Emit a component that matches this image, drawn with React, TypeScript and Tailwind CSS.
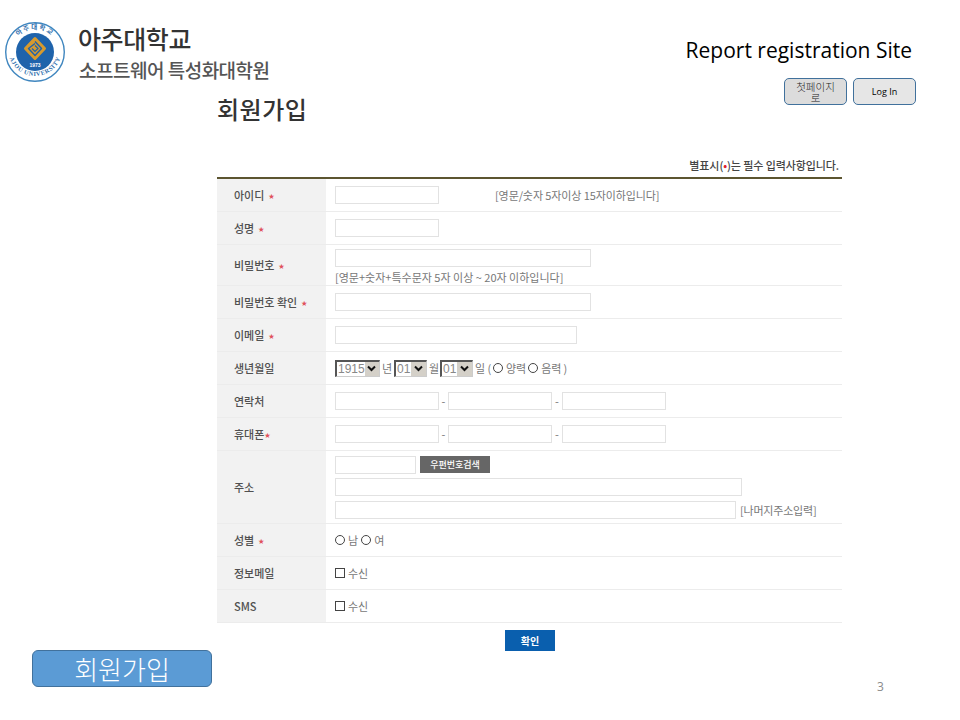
import React from "react";

const FONT = "[font-family:'Noto_Sans_CJK_KR','Noto_Sans',sans-serif]";

function Logo() {
  return (
    <svg width="60" height="60" viewBox="0 0 60 60" className="shrink-0">
      <defs>
        <path id="arcTop" d="M7 30 A23 23 0 0 1 53 30" />
        <path id="arcBottom" d="M3 27 A27 27 0 1 0 57 27" />
      </defs>
      <circle cx="30" cy="30" r="29.3" fill="#ffffff" stroke="#3f86bf" strokeWidth="1.4" />
      <circle cx="30" cy="30" r="19" fill="#1f63ab" />
      <path d="M30 16.5 L39.5 26.5 L30 36.5 L20.5 26.5 Z" fill="#d79a2e" stroke="#d79a2e" strokeWidth="3" strokeLinejoin="round" />
      <path d="M30 19.5 L36.5 26.5 L30 33.5 L23.5 26.5 L30 21.5" fill="none" stroke="#1f63ab" strokeWidth="1.4" strokeLinejoin="round" />
      <path d="M30 23.5 L33 26.5 L30 29.5 L27 26.5" fill="none" stroke="#1f63ab" strokeWidth="1.2" />
      <text x="30" y="45" textAnchor="middle" fontSize="5" fontWeight="700" fill="#ffffff" fontFamily="Liberation Sans">1973</text>
      <text fontSize="6.5" fontWeight="700" fill="#2f6fae" fontFamily="Noto Sans CJK KR" letterSpacing="1.5">
        <textPath href="#arcTop" startOffset="50%" textAnchor="middle">아주대학교</textPath>
      </text>
      <text fontSize="6.2" fontWeight="700" fill="#2f6fae" fontFamily="Liberation Serif" letterSpacing="0.6">
        <textPath href="#arcBottom" startOffset="50%" textAnchor="middle">AJOU UNIVERSITY</textPath>
      </text>
    </svg>
  );
}

function Star({ tight }: { tight?: boolean }) {
  return <span className={`text-[#e0525c] text-[6px] ${tight ? "" : "ml-[4px]"}`}>★</span>;
}

function Field({ w }: { w: string }) {
  return <input className={`${w} h-[18px] border border-[#e2e2e2] bg-white block shrink-0`} />;
}

function Radio({ label }: { label: string }) {
  return (
    <span className="inline-flex items-center gap-[3px]">
      <span className="w-[10px] h-[10px] rounded-full border border-[#444] bg-white" />
      <span>{label}</span>
    </span>
  );
}

function Check({ label }: { label: string }) {
  return (
    <span className="inline-flex items-center gap-[3px]">
      <span className="w-[10px] h-[10px] border border-[#444] bg-white" />
      <span>{label}</span>
    </span>
  );
}

function Select({ value, w }: { value: string; w: string }) {
  return (
    <span className={`${w} h-[17px] flex items-stretch border-l-2 border-t-2 border-[#555] border-r border-b border-r-[#ccc] border-b-[#ccc] bg-white`}>
      <span className="flex-1 text-[12px] leading-[15px] text-[#888] pl-[1px] [font-family:'Liberation_Sans',sans-serif]">{value}</span>
      <span className="w-[15px] bg-[#d4d0c8] flex items-center justify-center">
        <svg width="9" height="7" viewBox="0 0 9 7">
          <path d="M1 1.5 L4.5 5 L8 1.5" fill="none" stroke="#111" strokeWidth="2" />
        </svg>
      </span>
    </span>
  );
}

function Row({ label, star, h, tight, children }: { label: string; star?: boolean; h: string; tight?: boolean; children: React.ReactNode }) {
  return (
    <div className={`flex ${h} border-b border-[#ececec]`}>
      <div className="w-[109px] shrink-0 bg-[#f2f2f2] pl-[17px] flex items-center text-[11px] font-medium text-[#505050]">
        <span>{label}</span>
        {star && <Star tight={tight} />}
      </div>
      <div className="flex-1 pl-[9px] text-[11px] text-[#777]">{children}</div>
    </div>
  );
}

function Phone() {
  return (
    <div className="h-full flex items-center">
      <Field w="w-[104px]" />
      <span className="w-[9px] text-center">-</span>
      <Field w="w-[104px]" />
      <span className="w-[10px] text-center">-</span>
      <Field w="w-[104px]" />
    </div>
  );
}

export default function App() {
  return (
    <div className={`w-[960px] h-[720px] bg-white flex flex-col overflow-hidden ${FONT}`}>
      <header className="h-[96px] flex justify-between shrink-0">
        <div className="flex pl-[5px] pt-[22px] gap-[13px]">
          <Logo />
          <div className="flex flex-col">
            <span className="text-[25px] leading-[32px] font-medium text-[#333] tracking-[-0.4px]">아주대학교</span>
            <span className="text-[19px] leading-[26px] mt-[3px] ml-[1px] font-medium text-[#555] tracking-[-0.5px]">소프트웨어 특성화대학원</span>
          </div>
        </div>
        <div className="flex flex-col items-end pr-[44px] pt-[36px]">
          <div className="text-[21px] leading-[28px] pr-[4px] text-black [font-family:'Open_Sans',sans-serif]">Report registration Site</div>
          <div className="flex gap-[6px] mt-[14px]">
            <button className="w-[63px] h-[27px] rounded-[5px] border border-[#41719c] bg-[#dcdcdc] text-[10.5px] leading-[11px] font-light text-[#222] px-[9px] break-all">첫페이지로</button>
            <button className="w-[63px] h-[27px] rounded-[5px] border border-[#41719c] bg-[#e6e6e6] text-[9px] text-black [font-family:'Open_Sans',sans-serif]">Log In</button>
          </div>
        </div>
      </header>

      <div className="flex flex-1 min-h-0">
        <aside className="w-[217px] shrink-0 flex flex-col justify-end pl-[32px] pb-[33px]">
          <div className="w-[180px] h-[37px] rounded-[6px] border border-[#41719c] bg-[#5b9bd5] text-white text-[26px] font-light leading-[35px] text-center">회원가입</div>
        </aside>

        <main className="w-[625px] shrink-0">
          <h1 className="text-[24px] leading-[30px] mt-[-2px] font-medium text-[#333] tracking-[0.5px]">회원가입</h1>
          <p className="text-right pr-[3px] mt-[33px] text-[11px] leading-[16px] font-medium text-[#444] tracking-[-0.1px]">
            별표시(<span className="text-[#e0202c]">•</span>)는 필수 입력사항입니다.
          </p>
          <div className="mt-[4px] border-t-2 border-[#5c5530]">
            <Row label="아이디" star h="h-[33px]">
              <div className="h-full flex items-center">
                <Field w="w-[104px]" />
                <span className="ml-[56px] tracking-[-0.1px]">[영문/숫자 5자이상 15자이하입니다]</span>
              </div>
            </Row>
            <Row label="성명" star h="h-[33px]">
              <div className="h-full flex items-center"><Field w="w-[104px]" /></div>
            </Row>
            <Row label="비밀번호" star h="h-[41px]">
              <div className="pt-[4px]">
                <Field w="w-[256px]" />
                <div className="leading-[18px] mt-[1px]">[영문+숫자+특수문자 5자 이상 ~ 20자 이하입니다]</div>
              </div>
            </Row>
            <Row label="비밀번호 확인" star h="h-[33px]">
              <div className="h-full flex items-center"><Field w="w-[256px]" /></div>
            </Row>
            <Row label="이메일" star h="h-[33px]">
              <div className="h-full flex items-center"><Field w="w-[242px]" /></div>
            </Row>
            <Row label="생년월일" h="h-[33px]">
              <div className="h-full flex items-center gap-[2px]">
                <Select value="1915" w="w-[45px]" />
                <span className="w-[10px]">년</span>
                <Select value="01" w="w-[33px]" />
                <span className="w-[9px]">월</span>
                <Select value="01" w="w-[33px]" />
                <span className="w-[16px] whitespace-nowrap">일 (</span>
                <Radio label="양력" />
                <Radio label="음력" />
                <span>)</span>
              </div>
            </Row>
            <Row label="연락처" h="h-[33px]"><Phone /></Row>
            <Row label="휴대폰" star tight h="h-[33px]"><Phone /></Row>
            <Row label="주소" h="h-[73px]">
              <div className="pt-[5px] flex flex-col">
                <div className="flex gap-[4px]">
                  <Field w="w-[81px]" />
                  <button className="w-[70px] h-[17px] bg-[#666] text-white text-[9px] font-medium">우편번호검색</button>
                </div>
                <div className="mt-[4px]"><Field w="w-[407px]" /></div>
                <div className="mt-[5px] flex items-center gap-[4px]">
                  <Field w="w-[401px]" />
                  <span className="tracking-[-0.2px]">[나머지주소입력]</span>
                </div>
              </div>
            </Row>
            <Row label="성별" star h="h-[33px]">
              <div className="h-full flex items-center gap-[3px]">
                <Radio label="남" />
                <Radio label="여" />
              </div>
            </Row>
            <Row label="정보메일" h="h-[33px]">
              <div className="h-full flex items-center"><Check label="수신" /></div>
            </Row>
            <Row label="SMS" h="h-[33px]">
              <div className="h-full flex items-center"><Check label="수신" /></div>
            </Row>
          </div>
          <div className="flex justify-center mt-[7px] pl-[1px]">
            <button className="w-[50px] h-[21px] bg-[#0a5fae] text-white text-[10px] font-bold">확인</button>
          </div>
        </main>

        <aside className="flex-1 flex flex-col justify-end pl-[35px] pb-[24px]">
          <span className="text-[12px] text-[#8a8a8a] [font-family:'Open_Sans',sans-serif]">3</span>
        </aside>
      </div>
    </div>
  );
}
